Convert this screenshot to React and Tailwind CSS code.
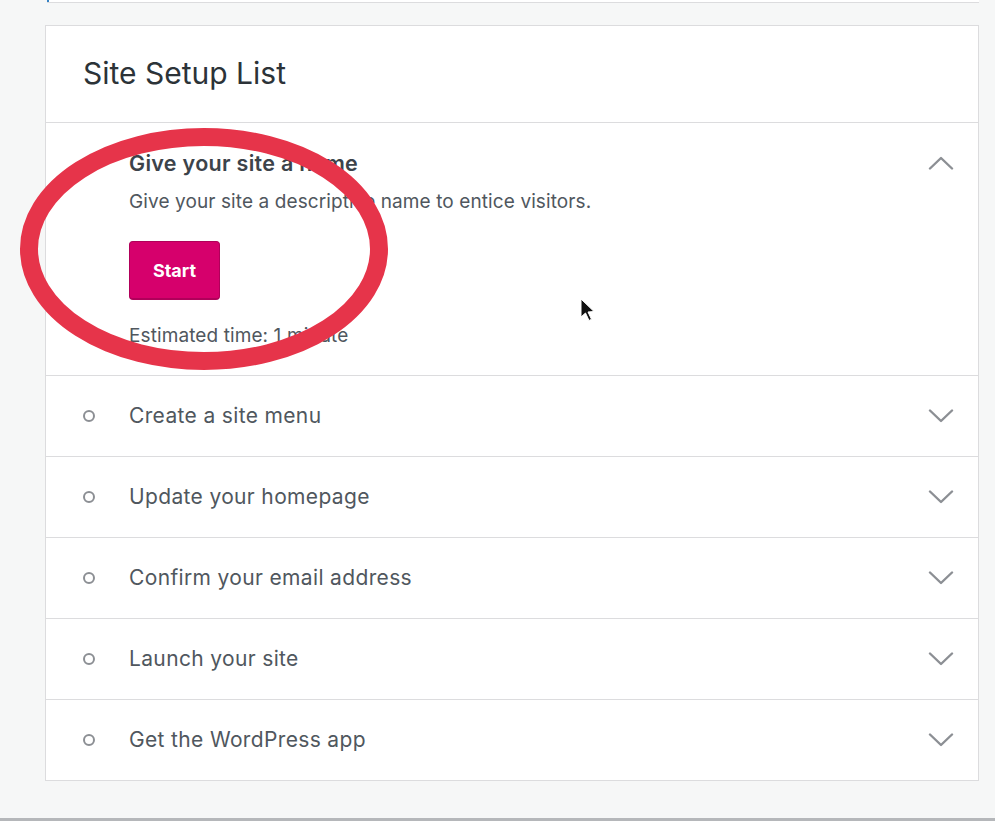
import React from "react";

const Chevron = ({ up }) => (
  <svg width="26" height="14" viewBox="0 0 26 14" fill="none" className="shrink-0">
    <path
      d={up ? "M2 12.5 L13 2 L24 12.5" : "M2 1.5 L13 12 L24 1.5"}
      stroke="#8c8f94"
      strokeWidth="2.4"
      strokeLinecap="round"
      strokeLinejoin="round"
    />
  </svg>
);

const Row = ({ label }) => (
  <div className="flex items-center h-[81px] border-t border-[#dcdcde] pl-[37px] pr-[24px]">
    <span className="w-[12px] h-[12px] rounded-full border-[2.5px] border-[#8c8f94] shrink-0" />
    <span className="ml-[34px] text-[21px] text-[#50575e] flex-1 tracking-[0.35px]">{label}</span>
    <Chevron />
  </div>
);

export default function App() {
  return (
    <div
      className="relative w-[995px] h-[821px] bg-[#f6f7f7] overflow-hidden"
      style={{ fontFamily: 'Inter, "Liberation Sans", Arial, sans-serif' }}
    >
      <div className="h-[3px] ml-[47px] mr-[16px] bg-white border-b border-[#dcdcde] flex">
        <div className="w-[2px] bg-[#3582c4]" />
      </div>

      <div className="mt-[22px] ml-[45px] w-[934px] bg-white border border-[#dcdcde]">
        <div className="h-[96px] flex items-center pl-[37px]">
          <h2 className="text-[30px] leading-[36px] text-[#2c3338] tracking-[0px] -mt-[2px]">Site Setup List</h2>
        </div>

        <div className="border-t border-[#dcdcde] h-[253px] pl-[83px] pr-[24px] relative">
          <div className="flex items-center pt-[26px] h-[54px]">
            <div className="flex-1 text-[21.5px] leading-[28px] font-semibold text-[#3c434a] tracking-[0.3px]">Give your site a name</div>
            <Chevron up />
          </div>
          <div className="mt-[11px] text-[19px] leading-[27px] text-[#50575e] tracking-[0.1px]">
            Give your site a descriptive name to entice visitors.
          </div>
          <button className="mt-[26px] w-[91px] h-[59px] rounded-[4px] bg-[#d6006c] border border-[#b0005a] border-b-[2px] text-white font-bold text-[18px] tracking-[0px]">
            Start
          </button>
          <div className="mt-[22px] text-[19px] leading-[27px] text-[#50575e] tracking-[0.1px]">Estimated time: 1 minute</div>
        </div>

        <Row label="Create a site menu" />
        <Row label="Update your homepage" />
        <Row label="Confirm your email address" />
        <Row label="Launch your site" />
        <Row label="Get the WordPress app" />
      </div>

      <div className="absolute left-0 right-0 bottom-0 h-[3px] bg-[#b5b7ba]" />

      <svg className="absolute left-0 top-0 pointer-events-none" width="995" height="821">
        <ellipse cx="204" cy="249" rx="175" ry="112" fill="none" stroke="#e6344a" strokeWidth="18" />
        <path
          d="M581 299 L581 317 L585.5 313 L589 320.5 L591.5 319.3 L588 312 L594 311.5 Z"
          fill="#111"
          stroke="#fff"
          strokeWidth="1"
          strokeLinejoin="round"
        />
      </svg>
    </div>
  );
}
